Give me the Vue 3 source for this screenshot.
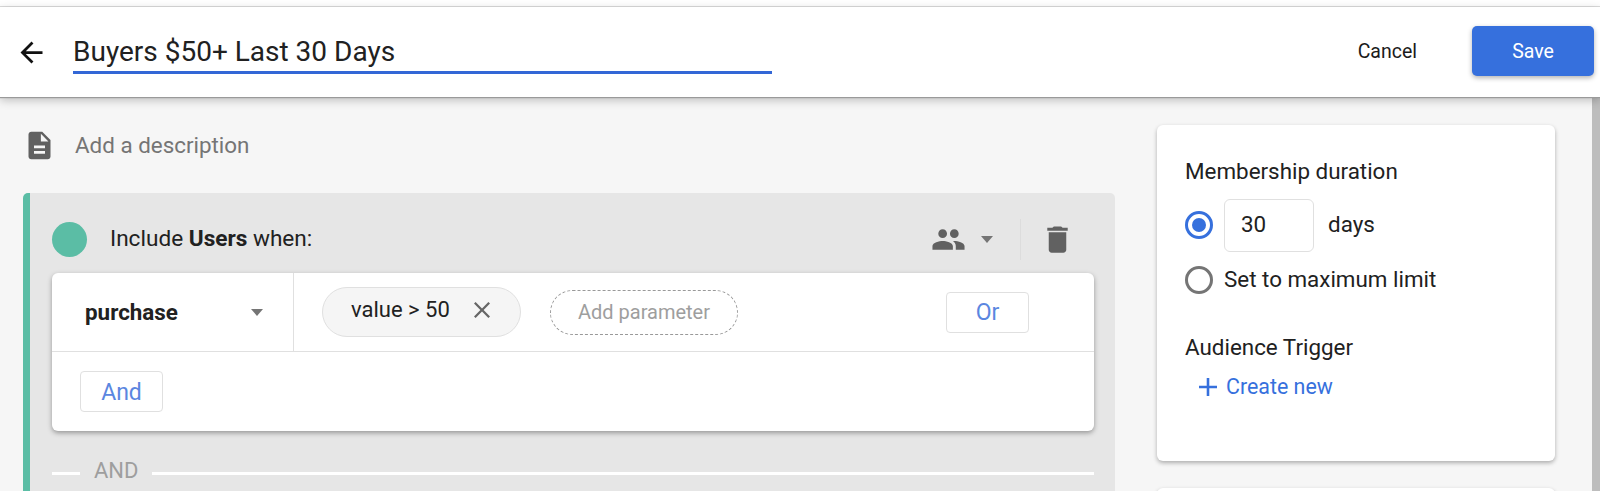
<script setup>
const icons = {
  back: 'M20 11H7.83l5.59-5.59L12 4l-8 8 8 8 1.41-1.41L7.83 13H20v-2z',
  doc: 'M14 2H6c-1.1 0-2 .9-2 2v16c0 1.1.9 2 2 2h12c1.1 0 2-.9 2-2V8l-6-6zm2 16H8v-2h8v2zm0-4H8v-2h8v2zm-3-5V3.5L18.5 9H13z',
  people: 'M16 11c1.66 0 2.99-1.34 2.99-3S17.66 5 16 5c-1.66 0-3 1.34-3 3s1.34 3 3 3zm-8 0c1.66 0 2.99-1.34 2.99-3S9.66 5 8 5C6.34 5 5 6.34 5 8s1.34 3 3 3zm0 2c-2.33 0-7 1.17-7 3.5V19h14v-2.5c0-2.33-4.67-3.5-7-3.5zm8 0c-.29 0-.62.02-.97.05 1.16.84 1.97 1.97 1.97 3.45V19h6v-2.5c0-2.33-4.67-3.5-7-3.5z',
  trash: 'M6 19c0 1.1.9 2 2 2h8c1.1 0 2-.9 2-2V7H6v12zM19 4h-3.5l-1-1h-5l-1 1H5v2h14V4z',
  close: 'M19 6.41L17.59 5 12 10.59 6.41 5 5 6.41 10.59 12 5 17.59 6.41 19 12 13.41 17.59 19 19 17.59 13.41 12z',
  plus: 'M19 13h-6v6h-2v-6H5v-2h6V5h2v6h6v2z'
}
</script>

<template>
  <div class="page">
    <div class="strip"></div>
    <header class="header">
      <svg class="back" viewBox="0 0 24 24"><path :d="icons.back" /></svg>
      <div class="title">Buyers $50+ Last 30 Days</div>
      <div class="actions">
        <span class="cancel">Cancel</span>
        <button class="save">Save</button>
      </div>
    </header>
    <div class="body">
      <main class="content">
        <section class="left">
          <div class="desc">
            <svg class="doc" viewBox="0 0 24 24"><path :d="icons.doc" /></svg>
            <span>Add a description</span>
          </div>
          <div class="group">
            <div class="group-head">
              <span class="dot"></span>
              <span class="include">Include <b>Users</b> when:</span>
              <svg class="people" viewBox="0 0 24 24"><path :d="icons.people" /></svg>
              <span class="tri head-tri"></span>
              <span class="vline"></span>
              <svg class="trash" viewBox="0 0 24 24"><path :d="icons.trash" /></svg>
            </div>
            <div class="card">
              <div class="row-top">
                <div class="event">
                  <b>purchase</b>
                  <span class="tri event-tri"></span>
                </div>
                <div class="params">
                  <span class="chip">
                    <span>value &gt; 50</span>
                    <svg class="chip-x" viewBox="5 5 14 14"><path :d="icons.close" /></svg>
                  </span>
                  <span class="add-param">Add parameter</span>
                  <button class="outline or">Or</button>
                </div>
              </div>
              <div class="row-bottom">
                <button class="outline">And</button>
              </div>
            </div>
            <div class="and-row">
              <span class="and-stub"></span>
              <span class="and-label">AND</span>
              <span class="and-line"></span>
            </div>
          </div>
        </section>
        <aside class="right">
          <div class="side-card">
            <div class="side-title">Membership duration</div>
            <div class="radio-row first">
              <span class="radio on"></span>
              <span class="num">30</span>
              <span class="days">days</span>
            </div>
            <div class="radio-row second">
              <span class="radio"></span>
              <span class="radio-label">Set to maximum limit</span>
            </div>
            <div class="side-title trigger">Audience Trigger</div>
            <div class="create">
              <svg class="plus" viewBox="5 5 14 14"><path :d="icons.plus" /></svg>
              <span>Create new</span>
            </div>
          </div>
          <div class="side-card next"></div>
        </aside>
      </main>
      <div class="scrollbar"></div>
    </div>
  </div>
</template>

<style>
html, body { margin: 0; background: #f5f5f5; }
</style>

<style scoped>
.page {
  height: 491px;
  overflow: hidden;
  display: flex;
  flex-direction: column;
  background: #f6f6f6;
  font-family: Roboto, "Liberation Sans", sans-serif;
  color: #212121;
}
.strip { height: 6px; background: #fff; border-bottom: 1px solid #dcdcdc; flex: none; }
.header {
  flex: none;
  height: 90px;
  background: #fff;
  display: flex;
  align-items: center;
  position: relative;
  z-index: 2;
  box-shadow: 0 1px 1px #9a9a9a, 0 3px 9px rgba(0, 0, 0, 0.24);
}
.back { width: 33px; height: 33px; margin-left: 15px; fill: #111; flex: none; }
.title {
  margin-left: 25px;
  width: 699px;
  height: 43px;
  line-height: 42px;
  box-sizing: border-box;
  font-size: 28px;
  border-bottom: 3px solid #3367d6;
}
.actions { margin-left: auto; display: flex; align-items: center; margin-right: 6px; margin-top: -2px; }
.cancel { font-size: 19.5px; color: #1b1b1b; margin-right: 55px; }
.save {
  width: 122px;
  height: 50px;
  border: 0;
  border-radius: 5px;
  background: #3670dd;
  color: #fff;
  font: 19.5px Roboto, sans-serif;
  box-shadow: 0 2px 5px rgba(0, 0, 0, 0.3);
}
.body { flex: 1; display: flex; min-height: 0; }
.content { flex: 1; display: flex; padding-left: 23px; min-width: 0; }
.scrollbar { width: 8px; background: #bdbdbd; flex: none; }
.left { width: 1092px; flex: none; }
.desc { height: 96px; display: flex; align-items: center; gap: 19px; font-size: 22.4px; color: #757575; }
.doc { width: 33px; height: 33px; fill: #616161; flex: none; }
.group { background: #e6e6e6; border-left: 7px solid #5bbda5; border-radius: 5px 5px 0 0; height: 300px; box-sizing: border-box; }
.group-head { height: 67px; padding-top: 13px; display: flex; align-items: center; padding-left: 22px; }
.dot { width: 35px; height: 35px; border-radius: 50%; background: #5bbda5; flex: none; }
.include { margin-left: 23px; padding-bottom: 2px; font-size: 22.6px; flex: 1; }
.people { width: 35px; height: 35px; fill: #616161; flex: none; }
.tri { width: 0; height: 0; border-style: solid; border-color: #757575 transparent transparent; border-width: 7px 6.5px 0; flex: none; }
.head-tri { margin-left: 15px; margin-right: 1px; }
.vline { width: 1px; height: 41px; background: #dcdcdc; margin-left: 26px; flex: none; }
.trash { width: 35px; height: 35px; fill: #616161; margin-left: 19px; margin-right: 40px; flex: none; }
.card {
  margin: 0 21px 0 22px;
  height: 158px;
  background: #fff;
  border-radius: 6px;
  box-shadow: 0 2px 5px rgba(0, 0, 0, 0.35);
}
.row-top { height: 78px; display: flex; border-bottom: 1px solid #e0e0e0; }
.event {
  width: 242px;
  box-sizing: border-box;
  flex: none;
  display: flex;
  align-items: center;
  justify-content: space-between;
  padding: 0 30px 0 33px;
  border-right: 1px solid #e0e0e0;
  font-size: 22.4px;
}
.params { flex: 1; display: flex; align-items: center; padding-left: 28px; padding-right: 65px; }
.chip {
  width: 199px;
  height: 50px;
  box-sizing: border-box;
  display: flex;
  align-items: center;
  padding: 0 30px 6px 28px;
  justify-content: space-between;
  border-radius: 25px;
  background: #f5f5f5;
  border: 1px solid #e0e0e0;
  font-size: 22px;
}
.chip-x { width: 16px; height: 16px; fill: #666; margin-top: 2px; }
.add-param {
  margin-left: 29px;
  width: 188px;
  height: 45px;
  box-sizing: border-box;
  display: flex;
  align-items: center;
  justify-content: center;
  border: 1px dashed #999;
  border-radius: 23px;
  color: #9e9e9e;
  font-size: 20px;
}
.outline {
  width: 83px;
  height: 41px;
  background: #fff;
  border: 1px solid #e0e0e0;
  border-radius: 4px;
  color: #5b86e0;
  font: 400 23px Roboto, sans-serif;
  padding: 1px 0 0;
}
.or { margin-left: auto; }
.row-bottom { padding: 19px 0 0 28px; }
.and-row { display: flex; align-items: center; margin-top: 30px; margin-left: 22px; margin-right: 21px; height: 24px; }
.and-stub { width: 28px; height: 3px; background: #fff; flex: none; }
.and-line { flex: 1; height: 3px; background: #fff; }
.and-label { margin: -6px 14px 0; font-size: 22px; color: #9e9e9e; }
.right { margin-left: 42px; width: 398px; flex: none; padding-top: 28px; }
.side-card {
  height: 336px;
  box-sizing: border-box;
  padding: 34px 28px 0;
  background: #fff;
  border-radius: 6px;
  box-shadow: 0 2px 4px rgba(0, 0, 0, 0.3);
  font-size: 22.4px;
}
.next { margin-top: 27px; height: 60px; }
.side-title { line-height: 24px; }
.radio-row { display: flex; align-items: center; gap: 11px; }
.first { margin-top: 16px; height: 52px; }
.second { margin-top: 15px; height: 27px; }
.radio {
  width: 28px;
  height: 28px;
  box-sizing: border-box;
  border: 3px solid #757575;
  border-radius: 50%;
  flex: none;
}
.radio.on { border-color: #3670dd; padding: 4px; background: #3670dd content-box; }
.radio-label { padding-bottom: 2px; }
.num {
  width: 90px;
  height: 53px;
  box-sizing: border-box;
  display: flex;
  align-items: center;
  padding: 0 0 2px 16px;
  border: 1px solid #e0e0e0;
  border-radius: 6px;
}
.days { margin-left: 3px; padding-bottom: 2px; }
.trigger { margin-top: 42px; }
.create { margin-top: 16px; padding-left: 14px; display: flex; align-items: center; gap: 9px; color: #3670dd; font-size: 21.4px; line-height: 24px; }
.plus { width: 18px; height: 18px; fill: #3670dd; flex: none; }
</style>
